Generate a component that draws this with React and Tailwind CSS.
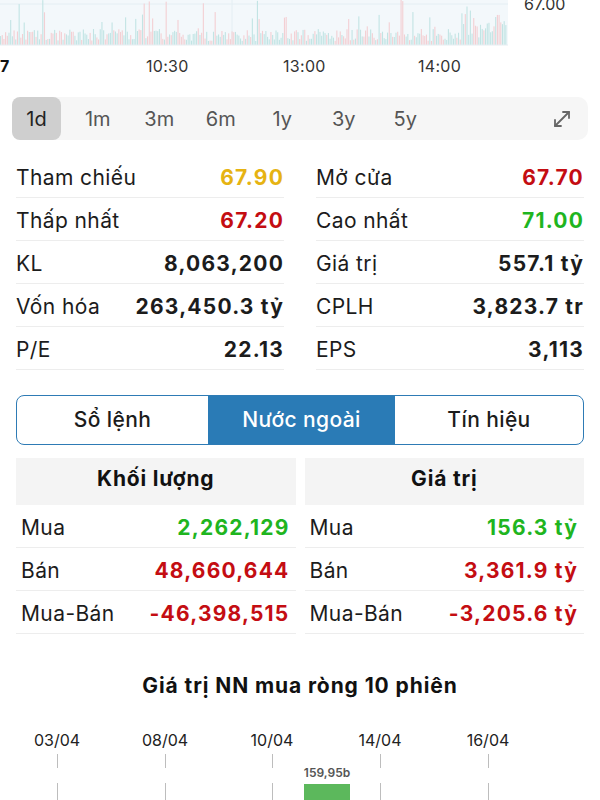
import React from 'react';

// deterministic volume bars for the intraday strip
const makeBars = () => {
  let s = 1234;
  const rnd = () => {
    s = (s * 9301 + 49297) % 233280;
    return s / 233280;
  };
  const bars = [];
  for (let i = 0; i < 300; i++) {
    const x = i * 1.69;
    let h = 4 + rnd() * 12;
    if (rnd() > 0.86) h += rnd() * 22;
    if (rnd() > 0.97) h = 40 + rnd() * 6;
    if (x > 460) h += rnd() * 22;
    bars.push({ x, h, red: rnd() > 0.6 });
  }
  return bars;
};
const BARS = makeBars();

const PERIODS = ['1m', '3m', '6m', '1y', '3y', '5y'];

const LEFT_STATS = [
  { label: 'Tham chiếu', value: '67.90', color: 'text-[#e6b312]' },
  { label: 'Thấp nhất', value: '67.20', color: 'text-[#c40d12]' },
  { label: 'KL', value: '8,063,200', color: 'text-[#1c1c1c]' },
  { label: 'Vốn hóa', value: '263,450.3 tỷ', color: 'text-[#1c1c1c]' },
  { label: 'P/E', value: '22.13', color: 'text-[#1c1c1c]' },
];

const RIGHT_STATS = [
  { label: 'Mở cửa', value: '67.70', color: 'text-[#c40d12]' },
  { label: 'Cao nhất', value: '71.00', color: 'text-[#1fb51f]' },
  { label: 'Giá trị', value: '557.1 tỷ', color: 'text-[#1c1c1c]' },
  { label: 'CPLH', value: '3,823.7 tr', color: 'text-[#1c1c1c]' },
  { label: 'EPS', value: '3,113', color: 'text-[#1c1c1c]' },
];

const VOLUME_ROWS = [
  { label: 'Mua', value: '2,262,129', color: 'text-[#1fb51f]' },
  { label: 'Bán', value: '48,660,644', color: 'text-[#c40d12]' },
  { label: 'Mua-Bán', value: '-46,398,515', color: 'text-[#c40d12]' },
];

const VALUE_ROWS = [
  { label: 'Mua', value: '156.3 tỷ', color: 'text-[#1fb51f]' },
  { label: 'Bán', value: '3,361.9 tỷ', color: 'text-[#c40d12]' },
  { label: 'Mua-Bán', value: '-3,205.6 tỷ', color: 'text-[#c40d12]' },
];

const DATES = [
  { label: '03/04', x: 57 },
  { label: '08/04', x: 165 },
  { label: '10/04', x: 272 },
  { label: '14/04', x: 380 },
  { label: '16/04', x: 488 },
];

function StatRow({ label, value, color }) {
  return (
    <div className="h-[43px] pt-[3px] flex items-center justify-between border-b border-[#ededed]">
      <span className="text-[21px] tracking-[0.4px] text-[#1c1c1c]">{label}</span>
      <span className={`text-[21px] font-bold tracking-[1.2px] ${color}`}>{value}</span>
    </div>
  );
}

function ForeignTable({ title, rows }) {
  return (
    <div className="flex-1">
      <div className="h-[47px] pb-[5px] bg-[#f4f4f4] flex items-center justify-center text-[21px] font-bold tracking-[0.8px] text-[#111]">
        {title}
      </div>
      {rows.map((r) => (
        <div key={r.label} className="h-[43px] pt-[3px] flex items-center justify-between pl-[5px] pr-[6px] border-b border-[#ededed]">
          <span className="text-[21px] tracking-[0.4px] text-[#1c1c1c]">{r.label}</span>
          <span className={`text-[21px] font-bold tracking-[1.2px] ${r.color}`}>{r.value}</span>
        </div>
      ))}
    </div>
  );
}

export default function App() {
  return (
    <div className="w-[600px] h-[800px] overflow-hidden bg-white font-['Inter','Noto_Sans',sans-serif]">
      {/* intraday chart strip */}
      <div className="relative h-[90px]">
        <svg width="510" height="46" className="absolute left-0 top-0">
          <rect x="0" y="0" width="508" height="45" fill="#f3f8fb" />
          <line x1="0" y1="4" x2="508" y2="4" stroke="#e4eef3" strokeWidth="1" />
          <line x1="232" y1="0" x2="232" y2="45" stroke="#e4eef3" strokeWidth="1" />
          {BARS.map((b, i) => (
            <rect
              key={i}
              x={b.x}
              y={45 - b.h}
              width="1.1"
              height={b.h}
              fill={b.red ? '#f3cfd3' : '#c2e4e4'}
            />
          ))}
          <line x1="0" y1="45" x2="508" y2="45" stroke="#e6eef2" strokeWidth="1" />
        </svg>
        <span className="absolute left-[524px] top-[-6px] text-[16px] leading-[20px] text-[#333]">67.00</span>
        <span className="absolute left-0 top-[56px] text-[16px] leading-[20px] font-bold text-[#111]">7</span>
        <span className="absolute left-[146px] top-[56px] text-[16px] leading-[20px] tracking-[0.3px] text-[#333]">10:30</span>
        <span className="absolute left-[283px] top-[56px] text-[16px] leading-[20px] tracking-[0.3px] text-[#333]">13:00</span>
        <span className="absolute left-[418px] top-[56px] text-[16px] leading-[20px] tracking-[0.3px] text-[#333]">14:00</span>
      </div>

      {/* period selector */}
      <div className="mx-[12px] mt-[7px] h-[43px] rounded-[10px] bg-[#f6f6f6] flex items-center">
        <div className="w-[49px] h-[43px] rounded-[8px] bg-[#cfcfcf] flex items-center justify-center text-[20px] text-[#222]">
          1d
        </div>
        <div className="flex ml-[6px]">
          {PERIODS.map((p) => (
            <div key={p} className="w-[61.5px] text-center text-[20px] text-[#555]">
              {p}
            </div>
          ))}
        </div>
        <div className="ml-auto mr-[14px] text-[#666]">
          <svg width="24" height="24" viewBox="0 0 24 24" fill="none" stroke="currentColor" strokeWidth="1.8" strokeLinecap="round" strokeLinejoin="round">
            <path d="M5 19L19 5" />
            <path d="M13 5h6v6" />
            <path d="M11 19H5v-6" />
          </svg>
        </div>
      </div>

      {/* stats */}
      <div className="mt-[15px] px-[16px] grid grid-cols-2 gap-x-[32px]">
        <div>
          {LEFT_STATS.map((s) => (
            <StatRow key={s.label} {...s} />
          ))}
        </div>
        <div>
          {RIGHT_STATS.map((s) => (
            <StatRow key={s.label} {...s} />
          ))}
        </div>
      </div>

      {/* tabs */}
      <div className="mx-[16px] mt-[25px] h-[50px] rounded-[8px] border-[1.5px] border-[#2e7bb5] flex overflow-hidden text-[21px] font-medium tracking-[0.4px]">
        <div className="w-[191px] flex items-center justify-center text-[#1c1c1c]">Sổ lệnh</div>
        <div className="w-[187px] bg-[#2a7bb6] flex items-center justify-center text-white">Nước ngoài</div>
        <div className="flex-1 flex items-center justify-center text-[#1c1c1c]">Tín hiệu</div>
      </div>

      {/* foreign trading */}
      <div className="mt-[13px] px-[16px] flex gap-[9px]">
        <ForeignTable title="Khối lượng" rows={VOLUME_ROWS} />
        <ForeignTable title="Giá trị" rows={VALUE_ROWS} />
      </div>

      <div className="mt-[38px] text-center text-[21px] font-bold tracking-[0.9px] text-[#111] leading-[28px]">
        Giá trị NN mua ròng 10 phiên
      </div>

      {/* net buy chart */}
      <div className="relative h-[100px]">
        {DATES.map((d) => (
          <div key={d.label}>
            <span
              className="absolute top-[30px] w-[60px] ml-[-30px] text-center text-[16px] leading-[20px] text-[#222]"
              style={{ left: d.x }}
            >
              {d.label}
            </span>
            <div className="absolute top-[54px] w-px h-[14px] bg-[#bdbdbd]" style={{ left: d.x }} />
            <div className="absolute top-[83px] w-px h-[17px] bg-[#bdbdbd]" style={{ left: d.x }} />
          </div>
        ))}
        <span className="absolute left-[297px] top-[64px] w-[60px] text-center text-[12px] font-semibold text-[#555]">
          159,95b
        </span>
        <div className="absolute left-[304px] top-[84px] w-[46px] h-[16px] bg-[#5cb85c]" />
      </div>
    </div>
  );
}
